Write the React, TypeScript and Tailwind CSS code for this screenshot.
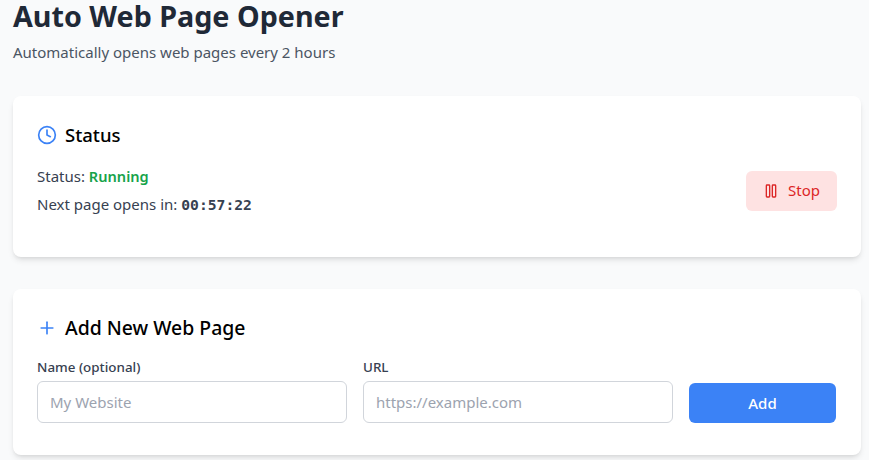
import { Clock, Pause, Plus } from 'lucide-react'

const App = () => {
  return (
    <div className="h-[460px] overflow-hidden bg-[#f9fafb] pl-[13px] pr-2 font-['Noto_Sans',sans-serif]">
      <div>
        <h1 className="text-[28.7px] leading-[32px] font-bold text-[#1f2937]">Auto Web Page Opener</h1>
        <p className="mt-[10px] text-[15px] leading-[20px] text-[#4b5563]">Automatically opens web pages every 2 hours</p>
      </div>

      <div className="mt-[34px] bg-white rounded-lg shadow-md px-6 pt-[25px] h-[161px]">
        <div className="flex items-center gap-2 h-[28px] mb-[17px]">
          <Clock size={20} className="text-[#3b82f6]" />
          <h2 className="text-[18.5px] leading-[28px] font-medium text-black">Status</h2>
        </div>
        <div className="flex items-center justify-between">
          <div className="text-[15px] text-[#374151]">
            <p className="leading-[20px]">Status: <span className="font-semibold text-[#16a34a] text-[14.6px]">Running</span></p>
            <p className="mt-2 leading-[20px]">
              Next page opens in: <span className="font-['DejaVu_Sans_Mono',monospace] font-bold text-[14.7px]">00:57:22</span>
            </p>
          </div>
          <button className="flex items-center gap-[9px] h-10 w-[91px] pl-[17px] rounded-md bg-[#fee2e2] text-[#dc2626] text-[15px]">
            <Pause size={16} />
            Stop
          </button>
        </div>
      </div>

      <div className="mt-8 bg-white rounded-lg shadow-md px-6 pt-[25px] h-[166px]">
        <div className="flex items-center gap-2 h-[28px] mb-[15px]">
          <Plus size={20} className="text-[#3b82f6]" />
          <h2 className="text-[19.4px] leading-[28px] font-medium text-black">Add New Web Page</h2>
        </div>
        <div className="flex items-end gap-4 pr-px">
          <div className="flex-1">
            <label className="block mb-1 text-[13.4px] leading-[20px] font-medium text-[#374151]">Name (optional)</label>
            <input
              placeholder="My Website"
              className="w-full h-[42px] px-3 rounded-md border border-[#d1d5db] text-[15px] placeholder:text-[#9ca3af]"
            />
          </div>
          <div className="flex-1">
            <label className="block mb-1 text-[13.4px] leading-[20px] font-medium text-[#374151]">URL</label>
            <input
              placeholder="https://example.com"
              className="w-full h-[42px] px-3 rounded-md border border-[#d1d5db] text-[15px] placeholder:text-[#9ca3af]"
            />
          </div>
          <button className="w-[147px] h-10 rounded-md bg-[#3b82f6] text-white text-[15px] font-medium">Add</button>
        </div>
      </div>
    </div>
  )
}

export default App
